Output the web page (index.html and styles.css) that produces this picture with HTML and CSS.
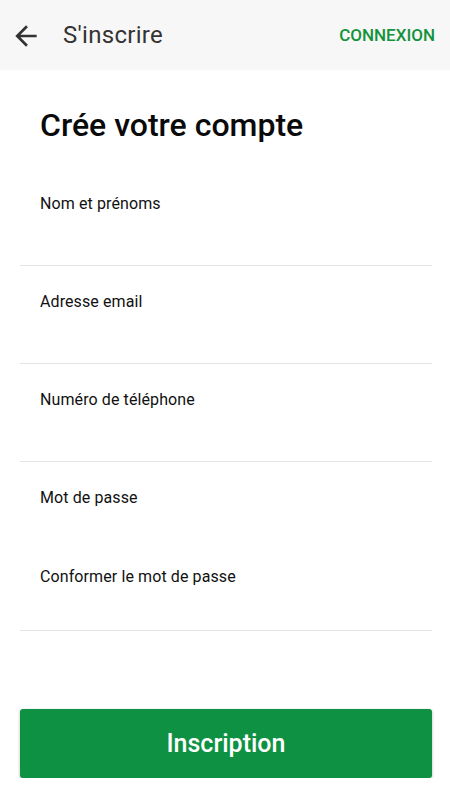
FILE: index.html
```html
<!DOCTYPE html>
<html>
<head>
    <meta charset="UTF-8" />
    <title>S'inscrire</title>
    <link rel="stylesheet" href="styles.css">
</head>
<body>
    <div class="topbar">
        <a href="#" class="back">
            <svg width="32" height="32" viewBox="0 0 24 24"><path d="M20 11H7.83l5.59-5.59L12 4l-8 8 8 8 1.41-1.41L7.83 13H20v-2z" fill="#333"/></svg>
        </a>
        <span class="title">S'inscrire</span>
        <a href="#" class="login">CONNEXION</a>
    </div>

    <div class="content">
        <h1>Crée votre compte</h1>
        <form class="form">
            <div class="field">
                <label>Nom et prénoms</label>
                <input type="text">
            </div>
            <div class="field">
                <label>Adresse email</label>
                <input type="email">
            </div>
            <div class="field">
                <label>Numéro de téléphone</label>
                <input type="tel">
            </div>
            <div class="field field-pass">
                <label>Mot de passe</label>
                <input type="password">
            </div>
            <div class="field field-confirm">
                <label>Conformer le mot de passe</label>
                <input type="password">
            </div>
            <button type="button" class="btn">Inscription</button>
        </form>
    </div>
</body>
</html>
```

FILE: styles.css
```css
* {
    margin: 0;
    padding: 0;
    box-sizing: border-box;
}
body {
    background-color: #fff;
    font-family: Roboto, "Noto Sans", sans-serif;
    color: #111;
}

.topbar {
    height: 70px;
    background-color: #f7f7f7;
    display: flex;
    align-items: center;
    padding: 0 15px 0 10px;
}
.back {
    display: flex;
    width: 32px;
    height: 32px;
    margin-top: 1px;
}
.title {
    font-size: 24px;
    letter-spacing: 0.3px;
    color: #333;
    margin-left: 21px;
    flex: 1;
}
.login {
    color: #14923c;
    font-size: 17px;
    font-weight: 500;
    text-decoration: none;
}

.content {
    padding: 0 18px 0 20px;
}
h1 {
    font-size: 32px;
    font-weight: 500;
    color: #0a0a0a;
    padding: 36px 0 0 20px;
    height: 98px;
}

.field {
    border-bottom: 1px solid #e4e4e4;
    padding-top: 26px;
    height: 98px;
}
.field label {
    display: block;
    font-size: 16px;
    line-height: 20px;
    letter-spacing: 0.1px;
    padding-left: 20px;
    color: #111;
}
.field input {
    display: block;
    width: 100%;
    height: 51px;
    border: none;
    outline: none;
    background: transparent;
}
.field-pass {
    border-bottom: none;
    height: 79px;
}
.field-confirm {
    height: 90px;
}
.field-confirm input {
    height: 43px;
}

.btn {
    display: block;
    width: 100%;
    height: 69px;
    margin-top: 78px;
    border: none;
    border-radius: 3px;
    background-color: #0e9142;
    color: #fff;
    font-family: Roboto, sans-serif;
    font-size: 25px;
    font-weight: 500;
    box-shadow: 0 1px 3px rgba(0, 0, 0, 0.3);
}
```
